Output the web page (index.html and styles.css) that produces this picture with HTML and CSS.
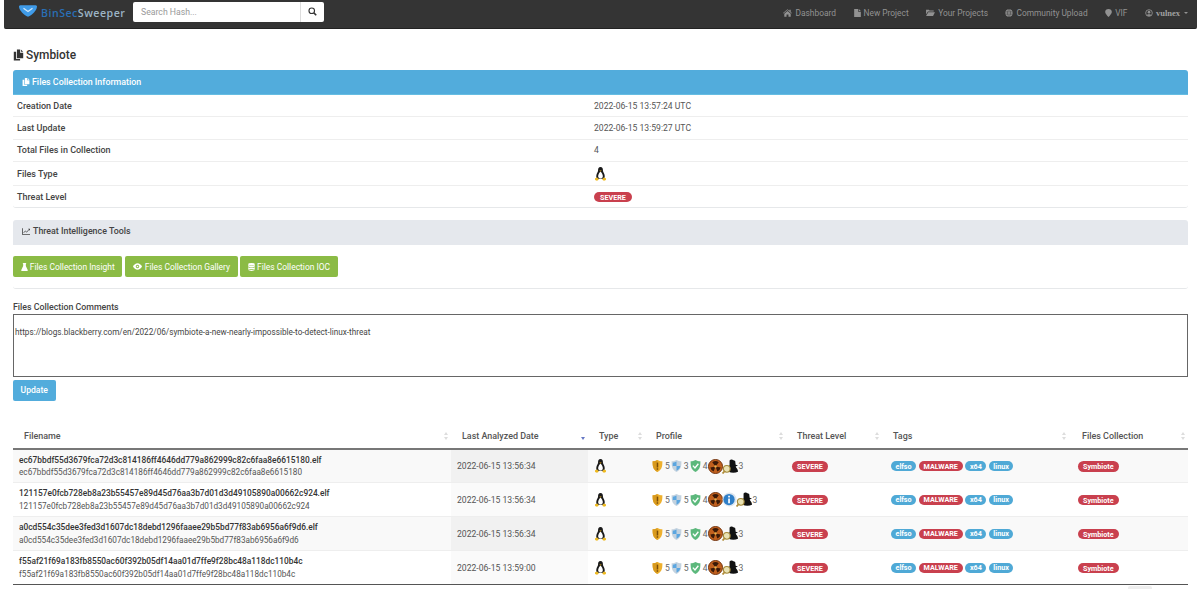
FILE: index.html
```html
<!DOCTYPE html>
<html lang="en">
<head>
<meta charset="utf-8">
<title>Symbiote</title>
<link rel="stylesheet" href="styles.css">
</head>
<body>
<svg class="defs" width="0" height="0" aria-hidden="true">
  <symbol id="penguin" viewBox="0 0 16 18">
    <path d="M8 0C5.6 0 4.8 2 4.9 4.2 5 6 3.6 7.200 2.900 9.500 2.300 11.500 2.500 13.500 3.500 15h9c1-1.500 1.200-3.500.6-5.500C12.400 7.200 11 6 11.100 4.200 11.200 2 10.400 0 8 0z" fill="#1a1a1a"/>
    <path d="M8 6C6.300 7 5 9.500 5 12c0 1.500.8 2.800 3 2.800s3-1.300 3-2.800c0-2.500-1.300-5-3-6z" fill="#fff"/>
    <path d="M6.500 4.600h3L8 6z" fill="#e8b020"/>
    <path d="M1 14.500l3-1 1.800 3-2.300 1.300L1 16.800zM15 14.500l-3-1-1.800 3 2.300 1.300 2.500-1z" fill="#eeb91f"/>
  </symbol>
  <symbol id="sh-y" viewBox="0 0 14 16">
    <path d="M7 0c2 1.300 4 1.800 6.500 1.800 0 6 0 11-6.500 14.200C.5 12.800.5 7.800.5 1.800 3 1.800 5 1.300 7 0z" fill="#eeb02e"/>
    <path d="M7 0v16C.5 12.800.5 7.800.5 1.800 3 1.800 5 1.300 7 0z" fill="#d89a1e"/>
    <rect x="6" y="3.500" width="2" height="6.500" fill="#7a4d08"/><rect x="6" y="11" width="2" height="2" fill="#7a4d08"/>
  </symbol>
  <symbol id="sh-b" viewBox="0 0 14 16">
    <path d="M7 0c2 1.300 4 1.800 6.500 1.800 0 6 0 11-6.500 14.200C.5 12.800.5 7.800.5 1.800 3 1.800 5 1.300 7 0z" fill="#c3d2df"/>
    <path d="M7 2v6H2c0-1.600 0-3 .1-4.500C4 3.300 5.500 2.800 7 2zM7 8h5c-.3 3-1.800 4.800-5 6.300z" fill="#5ba6e0"/>
  </symbol>
  <symbol id="sh-g" viewBox="0 0 14 16">
    <path d="M7 0c2 1.300 4 1.800 6.500 1.800 0 6 0 11-6.500 14.200C.5 12.800.5 7.800.5 1.800 3 1.800 5 1.300 7 0z" fill="#5cb87c"/>
    <path d="M3.500 7.500L6.300 10.500 10.800 5" fill="none" stroke="#fff" stroke-width="1.800"/>
  </symbol>
  <symbol id="bio" viewBox="0 0 16 16">
    <circle cx="8" cy="8" r="7.500" fill="#c0601e"/><circle cx="8" cy="8" r="7.500" fill="none" stroke="#6e2f0a"/>
    <path d="M8 8L4.500 3.500a5.500 5.500 0 0 1 7 0zM8 8l5.500 1a5.500 5.500 0 0 1-3.500 4.200zM8 8l-2 5.200A5.500 5.500 0 0 1 2.500 9z" fill="#3a1a08"/>
    <circle cx="8" cy="8" r="1.300" fill="#eab04a"/>
  </symbol>
  <symbol id="info" viewBox="0 0 16 16">
    <circle cx="8" cy="8" r="7.500" fill="#dfe6ee"/><circle cx="7.500" cy="8" r="6" fill="#2f7fc8"/>
    <rect x="6.600" y="7" width="1.800" height="5" fill="#fff"/><rect x="6.600" y="4" width="1.800" height="1.800" fill="#fff"/>
  </symbol>
  <symbol id="spy" viewBox="0 0 18 16">
    <path d="M8 1.500c1-1.200 2.500-1.200 3.500-.5 1 .6 2 .4 2.500 1L14.500 6l2.500 1-2.500 1c.8 1.800 2.500 3 2.500 5.500-3 1.500-7 1.500-10 0 0-2 .5-3 1.500-4L5.500 8l2.500-1z" fill="#111"/>
    <circle cx="5" cy="10.500" r="3.600" fill="#e9e2b4" stroke="#a58a3a" stroke-width="1.200"/>
    <path d="M2.800 13L.5 15.500" stroke="#b08d3a" stroke-width="1.800"/>
  </symbol>
  <symbol id="files" viewBox="0 0 14 14">
    <path d="M5 0h4v4h4v7H5zM10 0l3 3h-3zM1 3h3v9h5v2H1z" fill="currentColor"/>
  </symbol>
  <symbol id="home" viewBox="0 0 14 12">
    <path d="M7 0l3 2.600V1h2v3.300L14 6l-.7.800L7 1.500.7 6.800 0 6zM2 7l5-4.200L12 7v5H8.500V8.500h-3V12H2z" fill="currentColor"/>
  </symbol>
  <symbol id="doc" viewBox="0 0 10 12">
    <path d="M0 0h6v4h4v8H0zM7 0l3 3H7z" fill="currentColor"/>
  </symbol>
  <symbol id="folder" viewBox="0 0 14 11">
    <path d="M0 1h4.500l1 1.500H12V4H3L0 8.500zM3.500 5H14l-3 6H0z" fill="currentColor"/>
  </symbol>
  <symbol id="globe" viewBox="0 0 12 12">
    <circle cx="6" cy="6" r="5.500" fill="currentColor"/>
    <path d="M.5 4.300h11M.5 7.700h11M6 .5c-3 3-3 8 0 11M6 .5c3 3 3 8 0 11" fill="none" stroke="#343434" stroke-width=".7"/>
  </symbol>
  <symbol id="pin" viewBox="0 0 10 12">
    <path d="M5 0c3 0 5 2 5 4.500S7 10 5 12C3 10 0 7 0 4.500S2 0 5 0z" fill="currentColor"/>
  </symbol>
  <symbol id="user" viewBox="0 0 12 12">
    <circle cx="6" cy="6" r="5" fill="none" stroke="currentColor" stroke-width="1.300"/>
    <circle cx="6" cy="4.800" r="2" fill="currentColor"/><path d="M2.500 9.500C3.500 7.500 8.500 7.500 9.500 9.500 8 11 4 11 2.500 9.500z" fill="currentColor"/>
  </symbol>
  <symbol id="flask" viewBox="0 0 10 12">
    <path d="M2.500 0h5v1H7v3.500L10 11l-.6 1H.6L0 11l3-6.500V1h-.5z" fill="currentColor"/>
  </symbol>
  <symbol id="eye" viewBox="0 0 14 10">
    <path d="M7 0c3 0 5.500 2 7 5-1.500 3-4 5-7 5S1.500 8 0 5c1.500-3 4-5 7-5z" fill="currentColor"/>
    <circle cx="7" cy="5" r="2.600" fill="#8bbb45"/><circle cx="7" cy="5" r="1.300" fill="currentColor"/>
  </symbol>
  <symbol id="db" viewBox="0 0 10 12">
    <ellipse cx="5" cy="1.800" rx="5" ry="1.800" fill="currentColor"/>
    <path d="M0 3c1.500 1.400 8.500 1.400 10 0v2.200C8.500 6.600 1.500 6.600 0 5.200zM0 6.200c1.500 1.400 8.500 1.400 10 0v2.300C8.500 9.900 1.500 9.900 0 8.500zM0 9.300c1.500 1.400 8.500 1.400 10 0v1C8.500 12.400 1.500 12.400 0 10.300z" fill="currentColor"/>
  </symbol>
  <symbol id="chart" viewBox="0 0 12 10">
    <path d="M0 0h1.200v8.800H12V10H0z" fill="currentColor"/>
    <path d="M2.500 7L5 4.200l2 1.800 3.500-4" fill="none" stroke="currentColor" stroke-width="1.200"/>
    <path d="M9 1h3v3z" fill="currentColor"/>
  </symbol>
  <symbol id="search" viewBox="0 0 12 12">
    <circle cx="5" cy="5" r="3.700" fill="none" stroke="currentColor" stroke-width="1.500"/>
    <path d="M7.800 7.800L11 11" stroke="currentColor" stroke-width="2"/>
  </symbol>
</svg>

<nav class="navbar">
  <div class="brand">
    <svg class="logo" viewBox="0 0 20 13"><path d="M1.500 0h17c1 0 1.500.8 1.500 1.800C19.500 6 15 11 10 13 5 11 .5 6 0 1.800 0 .8.500 0 1.500 0z" fill="#3f9be8"/><path d="M5 3.500l5 3.500 5-3.500" fill="none" stroke="#cfe7fb" stroke-width="1.500"/></svg>
    <span class="brand-a">BinSec</span><span class="brand-b">Sweeper</span>
  </div>
  <div class="search">
    <span class="search-input">Search Hash...</span>
    <span class="search-btn"><svg class="ic-search"><use href="#search"/></svg></span>
  </div>
  <ul class="menu">
    <li><svg class="ic ic-home"><use href="#home"/></svg>Dashboard</li>
    <li><svg class="ic ic-doc"><use href="#doc"/></svg>New Project</li>
    <li><svg class="ic ic-folder"><use href="#folder"/></svg>Your Projects</li>
    <li><svg class="ic ic-globe"><use href="#globe"/></svg>Community Upload</li>
    <li><svg class="ic ic-pin"><use href="#pin"/></svg>VIF</li>
    <li class="menu-user"><svg class="ic ic-globe"><use href="#user"/></svg><span class="username">vulnex</span><span class="caret"></span></li>
  </ul>
</nav>

<main class="content">
  <h1 class="title"><svg class="ic-title"><use href="#files"/></svg>Symbiote</h1>

  <section class="card">
    <div class="card-head head-info"><svg class="ic ic-head"><use href="#files"/></svg>Files Collection Information</div>
    <div class="info-row row-1"><span class="info-k">Creation Date</span><span>2022-06-15 13:57:24 UTC</span></div>
    <div class="info-row row-1"><span class="info-k">Last Update</span><span>2022-06-15 13:59:27 UTC</span></div>
    <div class="info-row row-1"><span class="info-k">Total Files in Collection</span><span>4</span></div>
    <div class="info-row row-2"><span class="info-k">Files Type</span><span class="cell-icon"><svg class="penguin"><use href="#penguin"/></svg></span></div>
    <div class="info-row row-3"><span class="info-k">Threat Level</span><span><span class="badge red badge-lg">SEVERE</span></span></div>
  </section>

  <section class="card tools">
    <div class="card-head head-grey"><svg class="ic ic-chart"><use href="#chart"/></svg>Threat Intelligence Tools</div>
    <div class="tool-btns">
      <a class="btn-green"><svg class="ic ic-flask"><use href="#flask"/></svg>Files Collection Insight</a>
      <a class="btn-green"><svg class="ic ic-eye"><use href="#eye"/></svg>Files Collection Gallery</a>
      <a class="btn-green"><svg class="ic ic-flask"><use href="#db"/></svg>Files Collection IOC</a>
    </div>
  </section>

  <label class="comment-label">Files Collection Comments</label>
  <div class="comment-box">https://blogs.blackberry.com/en/2022/06/symbiote-a-new-nearly-impossible-to-detect-linux-threat</div>
  <a class="btn-update">Update</a>

  <table class="files">
    <thead>
      <tr>
        <th class="c1">Filename<span class="sort"></span></th>
        <th class="c2">Last Analyzed Date<span class="sort sort-desc"></span></th>
        <th class="c3">Type<span class="sort"></span></th>
        <th class="c4">Profile<span class="sort"></span></th>
        <th class="c5">Threat Level<span class="sort"></span></th>
        <th class="c6">Tags<span class="sort"></span></th>
        <th class="c7">Files Collection<span class="sort"></span></th>
      </tr>
    </thead>
    <tbody>
      <tr class="odd">
        <td class="fname"><div class="f-main">ec67bbdf55d3679fca72d3c814186ff4646dd779a862999c82c6faa8e6615180.elf</div><div>ec67bbdf55d3679fca72d3c814186ff4646dd779a862999c82c6faa8e6615180</div></td>
        <td class="date">2022-06-15 13:56:34</td>
        <td><svg class="penguin"><use href="#penguin"/></svg></td>
        <td><div class="profile"><svg class="sh"><use href="#sh-y"/></svg>5<svg class="sh"><use href="#sh-b"/></svg>3<svg class="sh"><use href="#sh-g"/></svg>4<svg class="big"><use href="#bio"/></svg><svg class="spy"><use href="#spy"/></svg>3</div></td>
        <td><span class="badge red">SEVERE</span></td>
        <td><div class="tags"><span class="badge blue">elfso</span><span class="badge red">MALWARE</span><span class="badge blue">x64</span><span class="badge blue">linux</span></div></td>
        <td class="coll"><span class="badge red">Symbiote</span></td>
      </tr>
      <tr>
        <td class="fname"><div class="f-main">121157e0fcb728eb8a23b55457e89d45d76aa3b7d01d3d49105890a00662c924.elf</div><div>121157e0fcb728eb8a23b55457e89d45d76aa3b7d01d3d49105890a00662c924</div></td>
        <td class="date">2022-06-15 13:56:34</td>
        <td><svg class="penguin"><use href="#penguin"/></svg></td>
        <td><div class="profile"><svg class="sh"><use href="#sh-y"/></svg>5<svg class="sh"><use href="#sh-b"/></svg>5<svg class="sh"><use href="#sh-g"/></svg>4<svg class="big"><use href="#bio"/></svg><svg class="big"><use href="#info"/></svg><svg class="spy"><use href="#spy"/></svg>3</div></td>
        <td><span class="badge red">SEVERE</span></td>
        <td><div class="tags"><span class="badge blue">elfso</span><span class="badge red">MALWARE</span><span class="badge blue">x64</span><span class="badge blue">linux</span></div></td>
        <td class="coll"><span class="badge red">Symbiote</span></td>
      </tr>
      <tr class="odd">
        <td class="fname"><div class="f-main">a0cd554c35dee3fed3d1607dc18debd1296faaee29b5bd77f83ab6956a6f9d6.elf</div><div>a0cd554c35dee3fed3d1607dc18debd1296faaee29b5bd77f83ab6956a6f9d6</div></td>
        <td class="date">2022-06-15 13:56:34</td>
        <td><svg class="penguin"><use href="#penguin"/></svg></td>
        <td><div class="profile"><svg class="sh"><use href="#sh-y"/></svg>5<svg class="sh"><use href="#sh-b"/></svg>5<svg class="sh"><use href="#sh-g"/></svg>4<svg class="big"><use href="#bio"/></svg><svg class="spy"><use href="#spy"/></svg>3</div></td>
        <td><span class="badge red">SEVERE</span></td>
        <td><div class="tags"><span class="badge blue">elfso</span><span class="badge red">MALWARE</span><span class="badge blue">x64</span><span class="badge blue">linux</span></div></td>
        <td class="coll"><span class="badge red">Symbiote</span></td>
      </tr>
      <tr>
        <td class="fname"><div class="f-main">f55af21f69a183fb8550ac60f392b05df14aa01d7ffe9f28bc48a118dc110b4c</div><div>f55af21f69a183fb8550ac60f392b05df14aa01d7ffe9f28bc48a118dc110b4c</div></td>
        <td class="date">2022-06-15 13:59:00</td>
        <td><svg class="penguin"><use href="#penguin"/></svg></td>
        <td><div class="profile"><svg class="sh"><use href="#sh-y"/></svg>5<svg class="sh"><use href="#sh-b"/></svg>5<svg class="sh"><use href="#sh-g"/></svg>4<svg class="big"><use href="#bio"/></svg><svg class="spy"><use href="#spy"/></svg>3</div></td>
        <td><span class="badge red">SEVERE</span></td>
        <td><div class="tags"><span class="badge blue">elfso</span><span class="badge red">MALWARE</span><span class="badge blue">x64</span><span class="badge blue">linux</span></div></td>
        <td class="coll"><span class="badge red">Symbiote</span></td>
      </tr>
    </tbody>
  </table>
  <div class="pager"><span class="pager-page"></span></div>
</main>
</body>
</html>
```

FILE: styles.css
```css
* { box-sizing: border-box; }
html, body { margin: 0; padding: 0; height: 589px; overflow: hidden; background: #fff; }
body { font-family: "Roboto", "Liberation Sans", sans-serif; font-size: 8.6px; color: #444; }
.defs { display: block; height: 0; }

.navbar {
  display: flex; align-items: center; height: 28.500px; margin: 0 3px 0 4px; padding: 0 9px 2px 15px;
  background: #343434; border-bottom: 1px solid #222; border-radius: 0 0 2px 2px;
}
.brand { display: flex; align-items: center; width: 114px; font-family: "Open Sans", sans-serif; font-size: 10.6px; font-weight: 600; letter-spacing: .5px; white-space: nowrap; }
.logo { width: 18px; height: 12px; margin-right: 4px; margin-bottom: 3px; flex: none; }
.brand-a { color: #2a6fb5; }
.brand-b { color: #9db4c6; }
.search { display: flex; height: 20px; margin-top: -1px; }
.search-input { display: flex; align-items: center; width: 167px; padding-left: 8px; background: #fff; border-radius: 2px 0 0 2px; color: #999; font-size: 8.7px; }
.search-btn { display: flex; align-items: center; justify-content: center; width: 24px; height: 20px; background: #fff; border-left: 1px solid #ddd; border-radius: 0 2px 2px 0; color: #333; }
.ic-search { width: 9px; height: 9px; margin-bottom: 2px; }
.menu { display: flex; align-items: center; list-style: none; margin: 0 0 0 auto; padding: 0; gap: 17.500px; color: #929292; font-size: 8.400px; }
.menu li { display: flex; align-items: center; white-space: nowrap; }
.username { font-family: "Liberation Serif", serif; font-weight: 700; font-size: 8.5px; color: #a0a0a0; }
.caret { width: 0; height: 0; margin-left: 4px; border: 2.500px solid transparent; border-top-color: #929292; border-bottom: 0; }

.ic { display: inline-block; flex: none; margin-right: 3px; }
.ic-home { width: 9px; height: 8px; }
.ic-doc { width: 7px; height: 8px; }
.ic-folder { width: 9px; height: 7px; }
.ic-globe { width: 8px; height: 8px; }
.ic-pin { width: 7px; height: 8px; }
.ic-head { width: 8px; height: 8px; margin-right: 2px; }
.ic-chart { width: 8px; height: 7px; }
.ic-flask { width: 7px; height: 8px; margin-right: 2px; }
.ic-eye { width: 9px; height: 7px; margin-right: 3px; }

.content { padding: 0 12px 0 13px; }
.title { display: flex; align-items: center; height: 16px; margin: 18.500px 0 7px; font-size: 11.9px; font-weight: 500; color: #333; }
.ic-title { width: 11px; height: 12px; margin-right: 2px; }

.card { border-bottom: 1px solid #e6e8ea; border-radius: 3px; }
.card-head { display: flex; align-items: center; border-radius: 3px 3px 0 0; font-weight: 500; font-size: 8.850px; }
.head-info { height: 25px; padding-left: 9px; background: #52acdc; color: #fff; border-bottom: 1px solid #66bde2; padding-bottom: 1px; }
.head-grey { height: 25px; padding-left: 9px; padding-bottom: 3px; background: #e5e8ed; color: #444; }
.info-row { display: grid; grid-template-columns: 577px 1fr; align-items: center; padding: 0 0 0 4px; border-bottom: 1px solid #eee; color: #555; }
.info-row:last-child { border-bottom: 0; }
.info-k { color: #444; font-weight: 500; font-size: 9px; }
.row-1 { height: 22.300px; }
.row-2 { height: 24.600px; }
.row-3 { height: 21px; }
.cell-icon { display: flex; }

.badge { display: inline-flex; align-items: center; height: 10.500px; padding: 0 5px; border-radius: 6px; color: #fff; font-size: 7.200px; font-weight: 700; line-height: 1; white-space: nowrap; }
.badge-lg { padding: 0 6px; }
.red { background: #c9404e; }
.blue { background: #4fa9d6; padding: 0 4.500px; }

.penguin { width: 13px; height: 14px; display: block; }

.tools { margin-top: 12px; height: 69px; }
.tool-btns { display: flex; gap: 2.500px; margin-top: 11px; }
.btn-green { display: flex; align-items: center; height: 20.500px; padding: 0 7.800px; background: #8bbb45; border-radius: 2px; color: #fff; font-size: 8.450px; }

.comment-label { display: block; margin-top: 12.500px; height: 10px; color: #444; font-weight: 500; font-size: 8.800px; }
.comment-box { height: 63px; margin-top: 2px; padding: 12px 1px; border: 1px solid #666; color: #444; font-size: 8.180px; }
.btn-update { display: flex; align-items: center; justify-content: center; width: 42.500px; height: 21px; margin-top: 3px; background: #52acdc; border-radius: 2px; color: #fff; font-weight: 500; }

.files { width: 1175px; margin-top: 23px; border-collapse: collapse; table-layout: fixed; border-bottom: 1px solid #555; }
.files th { position: relative; height: 25px; padding: 0 0 0 11px; border-bottom: 2px solid #777; text-align: left; font-weight: 500; font-size: 8.950px; color: #555; }
.files td { height: 34px; padding: 0 0 0 6px; border-bottom: 1px solid #eee; color: #555; vertical-align: middle; }
.files tbody tr:last-child td { border-bottom: 0; }
.c1 { width: 438px; }
.c2 { width: 137px; }
.c3 { width: 57px; }
.c4 { width: 141px; }
.c5 { width: 96px; }
.c6 { width: 187px; }
.files th.c7 { padding-left: 13px; }
.files td.coll { padding-left: 9px; }
.odd td { background: #f9f9f9; }
.odd td.date { background: #f1f1f1; }
td.date { background: #fafafa; }
.files td.fname { font-size: 8.200px; line-height: 12.500px; }
.f-main { color: #333; font-weight: 500; font-size: 8.350px; }
.sort { position: absolute; top: 8px; right: 3px; width: 4px; height: 8px; }
.sort::before, .sort::after { content: ""; position: absolute; left: 0; border: 2px solid transparent; }
.sort::before { top: 0; border-top: 0; border-bottom: 3px solid #ddd; }
.sort::after { bottom: 0; border-bottom: 0; border-top: 3px solid #ddd; }
.sort-desc::before { border-bottom-color: transparent; }
.sort-desc::after { border-top-color: #6678c4; }
.profile { display: flex; align-items: center; color: #666; }
.sh { width: 11px; height: 12px; margin: 0 2px 0 1px; }
.big { width: 15px; height: 15px; margin-right: -1px; }
.spy { width: 17px; height: 15px; }
.tags { display: flex; gap: 2.500px; margin-left: 3px; }

.pager { display: flex; justify-content: flex-end; padding: 1px 36px 0 0; }
.pager-page { width: 24px; height: 12px; background: #eee; border-radius: 2px; }
```
